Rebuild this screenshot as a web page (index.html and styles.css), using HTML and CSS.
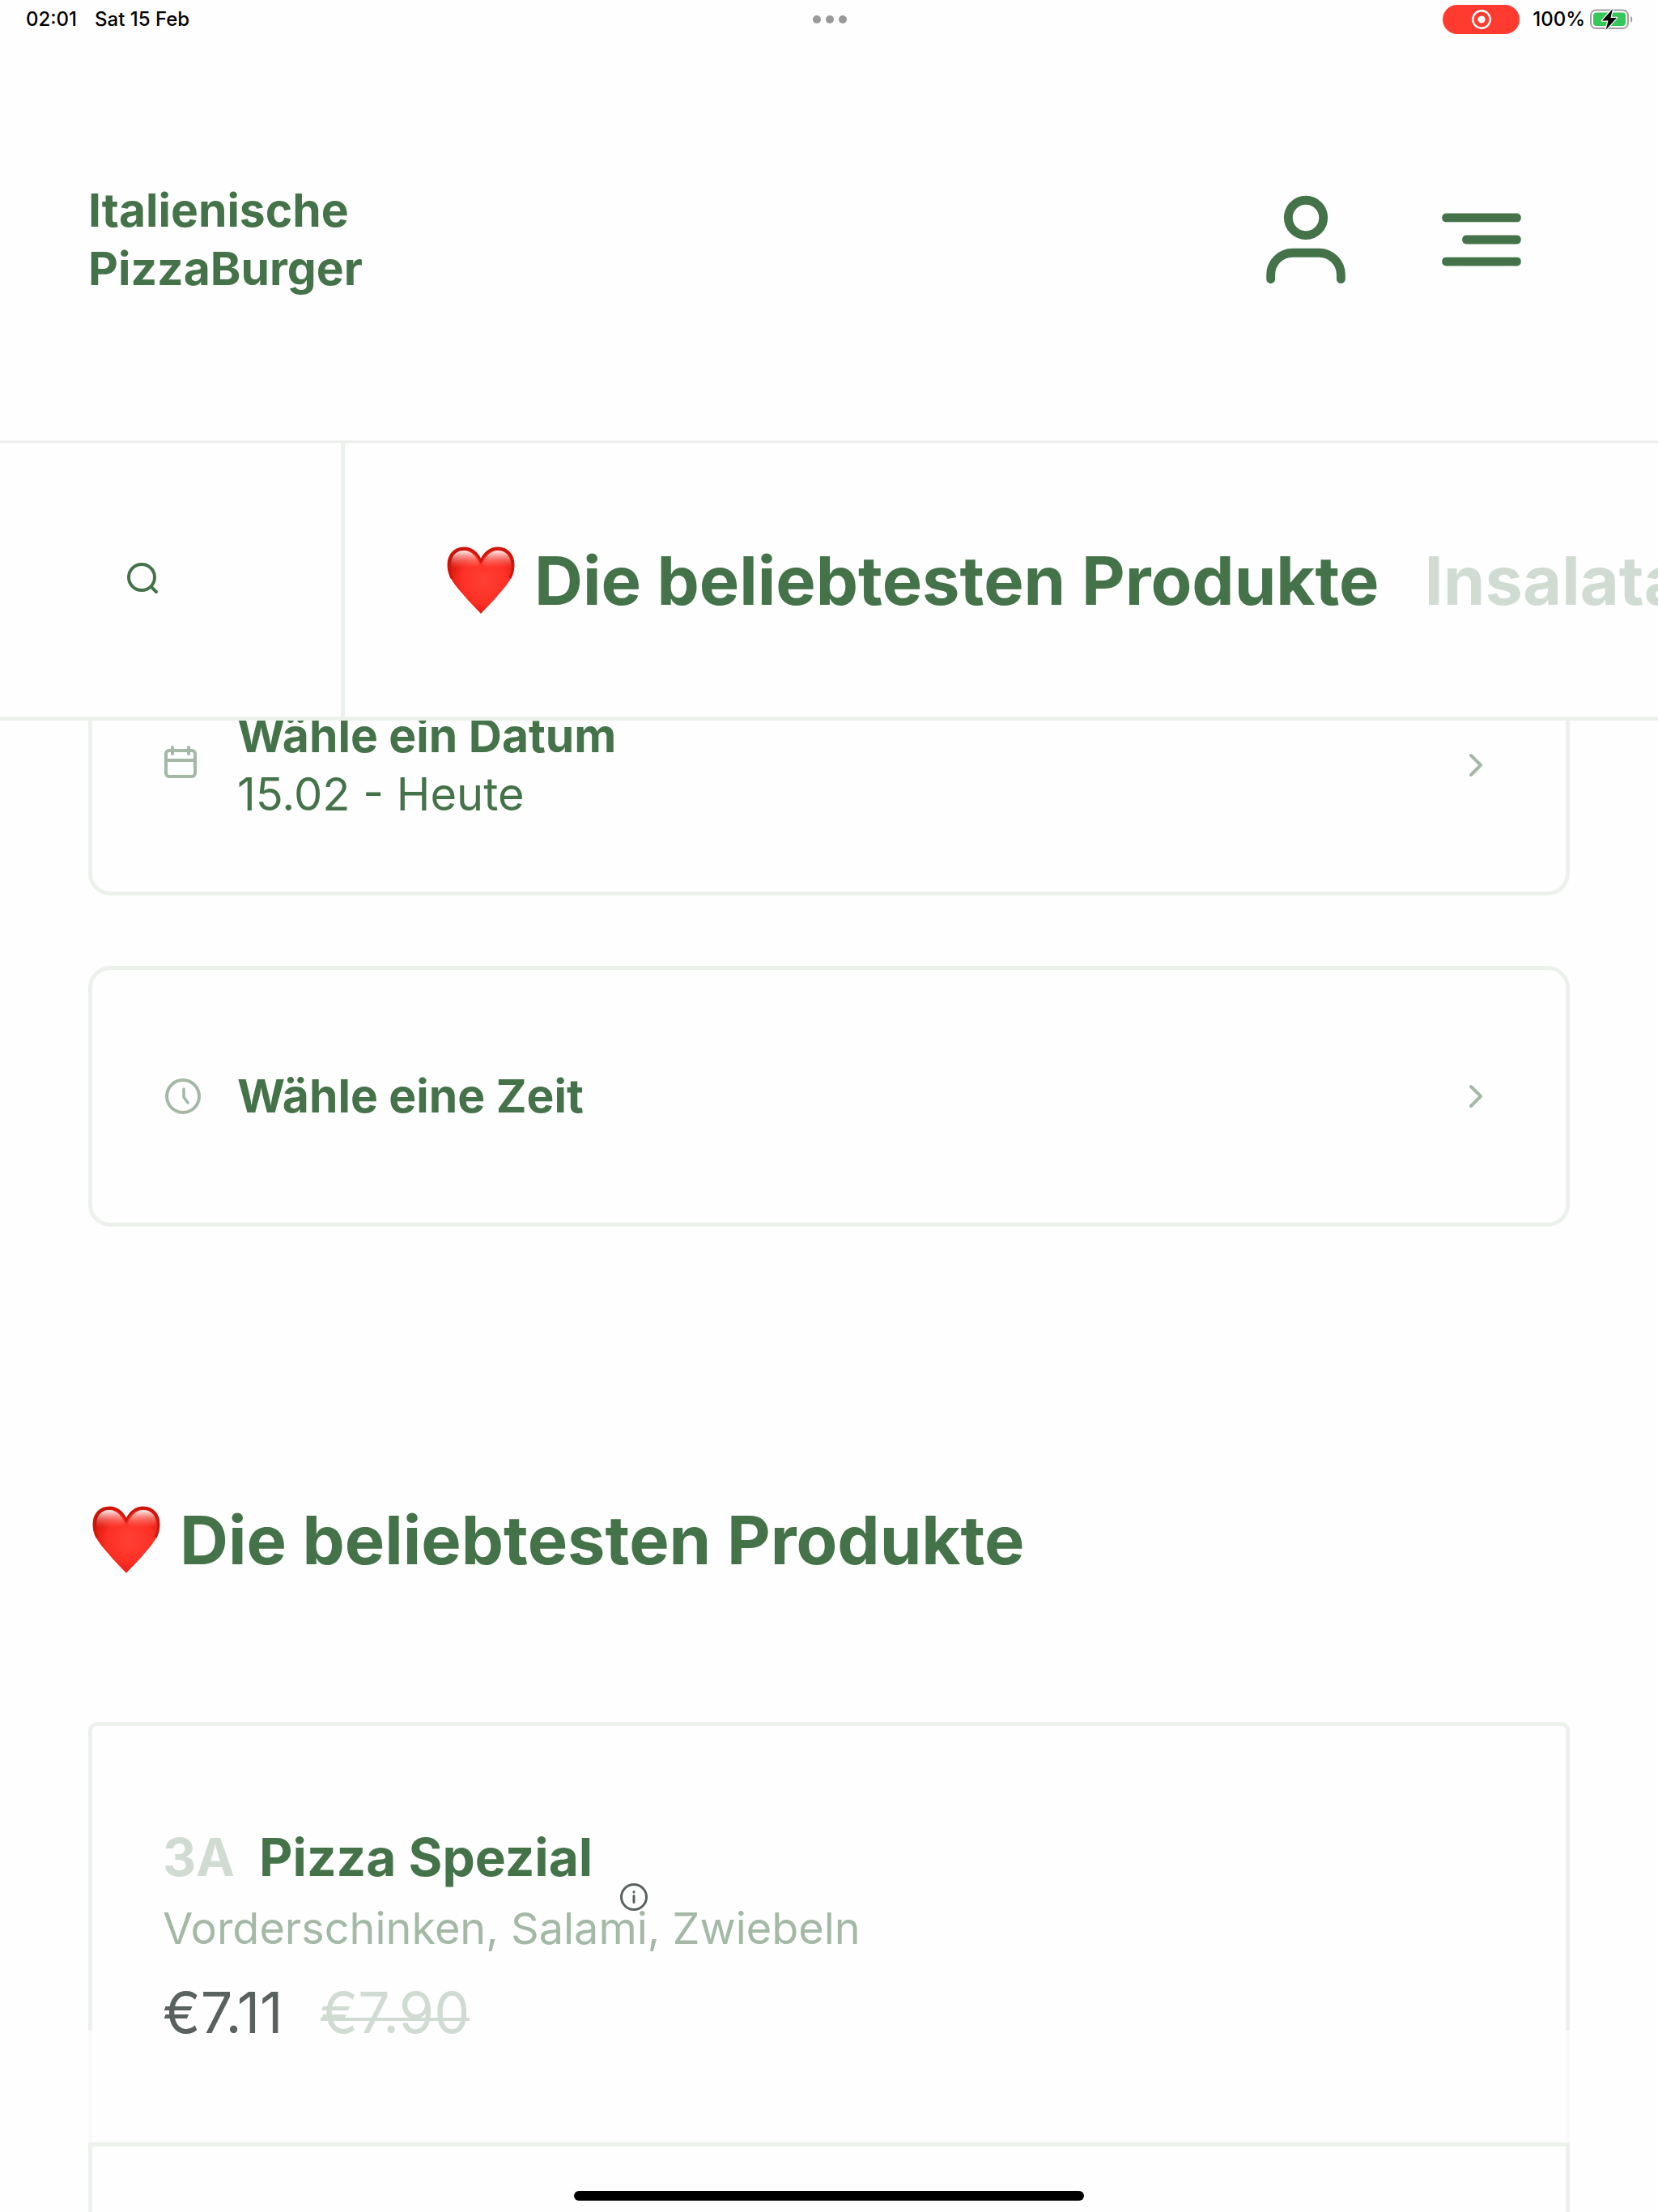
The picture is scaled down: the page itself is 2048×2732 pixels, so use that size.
FILE: index.html
```html
<!DOCTYPE html>
<html lang="de">
<head>
    <meta charset="UTF-8">
    <meta name="viewport" content="width=device-width, initial-scale=1.0">
    <title>Italienische PizzaBurger</title>
    <link rel="stylesheet" href="styles.css">
</head>
<body>
    <!-- Shared icon shapes -->
    <svg class="sprite" width="0" height="0" aria-hidden="true">
        <defs>
            <radialGradient id="heartFill" cx="0.55" cy="0.5" r="0.62">
                <stop offset="0" stop-color="#ff4034"/>
                <stop offset="0.55" stop-color="#fd3025"/>
                <stop offset="0.82" stop-color="#e01c12"/>
                <stop offset="1" stop-color="#a80d05"/>
            </radialGradient>
            <linearGradient id="heartShine" x1="0" y1="0" x2="0" y2="1">
                <stop offset="0" stop-color="#fff" stop-opacity="0.95"/>
                <stop offset="1" stop-color="#ff6a60" stop-opacity="0"/>
            </linearGradient>
            <symbol id="heart" viewBox="0 0 84 84">
                <path fill="url(#heartFill)" d="M42 83C35 75 27 68 19 58C8 46 1 36 1 23C1 10 9 1 21 1C31 1 38 8 42 16C46 8 53 1 63 1C75 1 83 10 83 23C83 36 76 46 65 58C57 68 49 75 42 83Z"/>
                <path fill="none" stroke="#cf1409" stroke-width="3" d="M6 39C3 33 2 28 2 23C2 10 10 2 21 2C31 2 38 9 42 18C46 9 53 2 63 2C74 2 82 10 82 23C82 28 81 33 78 39"/>
                <path fill="url(#heartShine)" d="M5 25C4 12 11 5 21 5C31 5 37 13 40 22C34 27 12 29 5 25Z"/>
                <path fill="url(#heartShine)" d="M79 25C80 12 73 5 63 5C53 5 47 13 44 22C50 27 72 29 79 25Z"/>
            </symbol>
            <symbol id="chevron" viewBox="0 0 16 30">
                <path fill="none" stroke="currentColor" stroke-width="4" stroke-linecap="round" stroke-linejoin="round" d="M2 3l12 12L2 27"/>
            </symbol>
        </defs>
    </svg>

    <header class="header">
        <div class="status-bar">
            <div class="status-left">
                <span>02:01</span>
                <span>Sat 15 Feb</span>
            </div>
            <div class="dots"><i></i><i></i><i></i></div>
            <div class="status-right">
                <span class="record">
                    <svg width="24" height="24" viewBox="0 0 24 24"><circle cx="12" cy="12" r="10.7" fill="none" stroke="#fff" stroke-width="2.4"/><circle cx="12" cy="12" r="4.6" fill="#fff"/></svg>
                </span>
                <span>100%</span>
                <svg class="battery" width="54" height="26" viewBox="0 0 54 26">
                    <rect x="1" y="1.5" width="46" height="22.5" rx="6.5" fill="none" stroke="#a0a0a0" stroke-width="2"/>
                    <rect x="4" y="4.5" width="40" height="16.5" rx="4" fill="#34c759"/>
                    <path d="M50 9c3 1 3 7 0 8z" fill="#a0a0a0"/>
                    <path d="M28 0L15 14.5h7.5L19.5 26L33 11h-7.5z" fill="#000" stroke="#fefefe" stroke-width="2.5" paint-order="stroke" stroke-linejoin="round"/>
                </svg>
            </div>
        </div>

        <div class="top">
            <a href="#" class="logo">Italienische<br>PizzaBurger</a>
            <div class="actions">
                <button class="icon-btn" aria-label="Konto">
                    <svg viewBox="0 0 24 24" fill="none" stroke="currentColor" stroke-width="2" stroke-linecap="round"><circle cx="12" cy="7" r="4"/><path d="M4 21v-1a5 5 0 0 1 5-5h6a5 5 0 0 1 5 5v1"/></svg>
                </button>
                <button class="icon-btn" aria-label="Menü">
                    <svg viewBox="0 0 24 24" fill="currentColor"><rect x="3" y="6" width="18" height="2" rx="0.9"/><rect x="7.6" y="11" width="13.4" height="2" rx="0.9"/><rect x="3" y="16" width="18" height="2" rx="0.9"/></svg>
                </button>
            </div>
        </div>

        <nav class="categories">
            <button class="search" aria-label="Suche">
                <svg width="40" height="40" viewBox="0 0 40 40" fill="none" stroke="currentColor" stroke-width="4" stroke-linecap="round"><circle cx="19" cy="19" r="16"/><path d="M31 31l6 6"/></svg>
            </button>
            <div class="tabs">
                <a href="#beliebt" class="tab active"><svg class="heart"><use href="#heart"/></svg>Die beliebtesten Produkte</a>
                <a href="#insalata" class="tab">Insalata</a>
            </div>
        </nav>
    </header>

    <main class="content">
        <button class="picker">
            <svg class="picker-icon" viewBox="0 4 44 44" fill="none" stroke="currentColor" stroke-width="4" stroke-linecap="round"><rect x="1" y="8" width="36" height="32" rx="4"/><path d="M1 20h36M9 4v8M29 4v8"/></svg>
            <span class="picker-text"><b>Wähle ein Datum</b><span class="value">15.02 - Heute</span></span>
            <svg class="chevron"><use href="#chevron"/></svg>
        </button>
        <button class="picker">
            <svg class="picker-icon" viewBox="0 0 44 44" fill="none" stroke="currentColor" stroke-width="4" stroke-linecap="round" stroke-linejoin="round"><circle cx="22" cy="22" r="20"/><path stroke-width="3.5" d="M23 13v10l5 7"/></svg>
            <span class="picker-text"><b>Wähle eine Zeit</b></span>
            <svg class="chevron"><use href="#chevron"/></svg>
        </button>

        <h2 class="section-title" id="beliebt"><svg class="heart"><use href="#heart"/></svg>Die beliebtesten Produkte</h2>

        <article class="product">
            <h3 class="name"><span class="number">3A</span>Pizza Spezial</h3>
            <p class="ingredients">Vorderschinken, Salami, Zwiebeln</p>
            <p class="prices"><span>€7.11</span><del>€7.90</del></p>
            <button class="info" aria-label="Produktinfo">
                <svg width="36" height="36" viewBox="0 0 36 36" fill="none" stroke="currentColor" stroke-width="3" stroke-linecap="round"><circle cx="18" cy="18" r="15.5"/><path d="M18 16.5v8"/><path d="M18 11.5v0.4"/></svg>
            </button>
        </article>
        <article class="product"></article>
    </main>

    <div class="home-indicator"></div>
</body>
</html>
```

FILE: styles.css
```css
* {
    margin: 0;
    padding: 0;
    box-sizing: border-box;
}

:root {
    --green: #457349;
    --green-mid: #a3b9a5;
    --green-light: #d0dcd2;
    --line: #ecf1ec;
    --grey: #5a625f;
    --bg: #fefefe;
}

body {
    height: 100vh;
    overflow: hidden;
    background: var(--bg);
    color: var(--green);
    font-family: Inter, "Liberation Sans", sans-serif;
    font-size: 57px;
    line-height: 72px;
}

button {
    border: none;
    background: none;
    color: inherit;
    font: inherit;
    text-align: left;
    cursor: pointer;
}

a {
    color: inherit;
    text-decoration: none;
}

svg {
    display: block;
    flex-shrink: 0;
}

.sprite {
    position: absolute;
}

/* Header */
.header {
    position: fixed;
    top: 0;
    left: 0;
    right: 0;
    z-index: 10;
    background: var(--bg);
}

.status-bar {
    display: grid;
    grid-template-columns: 1fr auto 1fr;
    align-items: center;
    height: 48px;
    padding: 0 30px 0 32px;
    color: #000;
    font-size: 24px;
    font-weight: 500;
    line-height: 28px;
}

.status-left {
    display: flex;
    gap: 22px;
}

.dots {
    display: flex;
    gap: 6px;
}

.dots i {
    width: 10px;
    height: 10px;
    border-radius: 50%;
    background: #999;
}

.status-right {
    display: flex;
    align-items: center;
    justify-content: flex-end;
    gap: 6px;
}

.record {
    display: flex;
    align-items: center;
    justify-content: center;
    width: 95px;
    height: 36px;
    margin-right: 10px;
    border-radius: 18px;
    background: #ff3b30;
}

.top {
    display: flex;
    align-items: center;
    justify-content: space-between;
    height: 499px;
    padding: 0 153px 0 109px;
    border-bottom: 3px solid #ebeeeb;
}

.logo {
    font-weight: 700;
}

.actions {
    display: flex;
    gap: 87px;
}

.icon-btn {
    width: 130px;
    height: 130px;
}

.categories {
    display: flex;
    height: 343px;
    border-bottom: 5px solid var(--line);
}

.search {
    flex: 0 0 426px;
    padding: 0 0 4px 156px;
    border-right: 5px solid var(--line);
}

.tabs {
    display: flex;
    flex: 1;
    align-items: center;
    gap: 56px;
    padding: 2px 0 0 126px;
    overflow: hidden;
}

.tab {
    display: flex;
    align-items: center;
    color: var(--green-light);
    font-size: 83px;
    font-weight: 700;
    line-height: 100px;
    white-space: nowrap;
}

.tab.active {
    color: var(--green);
}

.heart {
    width: 84px;
    height: 84px;
    margin-right: 24px;
}

.content {
    padding: 784px 109px 0;
}

.picker {
    display: flex;
    align-items: center;
    width: 100%;
    height: 322px;
    margin-bottom: 87px;
    padding: 0 103px 0 90px;
    border: 5px solid var(--line);
    border-radius: 27px;
}

.picker-icon {
    width: 44px;
    height: 44px;
    margin-right: 45px;
    overflow: visible;
    color: var(--green-mid);
}

.picker-text {
    display: flex;
    flex: 1;
    flex-direction: column;
}

.value {
    font-size: 56px;
}

.chevron {
    width: 16px;
    height: 30px;
    color: var(--green-mid);
}

.section-title {
    display: flex;
    align-items: center;
    margin: 337px 0 175px 5px;
    font-size: 83px;
    font-weight: 700;
    line-height: 100px;
}

.product {
    position: relative;
    min-height: 519px;
    padding: 122px 87px 0;
    border: 5px solid var(--line);
    border-bottom: none;
}

.product:first-of-type {
    border-radius: 10px 10px 0 0;
}

/* side borders fade out in the lower part of the card */
.product:first-of-type::after {
    content: "";
    position: absolute;
    right: -5px;
    bottom: 0;
    left: -5px;
    height: 138px;
    border: solid #fafafa;
    border-width: 0 5px;
}

.name {
    display: flex;
    gap: 30px;
    font-size: 64px;
    line-height: 80px;
}

.number {
    color: var(--green-light);
}

.ingredients {
    margin-top: 12px;
    color: var(--green-mid);
    font-size: 54px;
}

.prices {
    display: flex;
    gap: 46px;
    margin-top: 26px;
    color: var(--grey);
    font-size: 70px;
    line-height: 84px;
}

.prices del {
    position: relative;
    color: var(--green-light);
    text-decoration: none;
}

.prices del::after {
    content: "";
    position: absolute;
    top: 48px;
    left: 0;
    right: 0;
    height: 4px;
    background: var(--green-light);
}

.info {
    position: absolute;
    top: 193px;
    left: 651px;
    color: var(--grey);
}

.home-indicator {
    position: fixed;
    bottom: 14px;
    left: 50%;
    z-index: 20;
    width: 630px;
    height: 12px;
    margin-left: -315px;
    border-radius: 6px;
    background: #000;
}
```
